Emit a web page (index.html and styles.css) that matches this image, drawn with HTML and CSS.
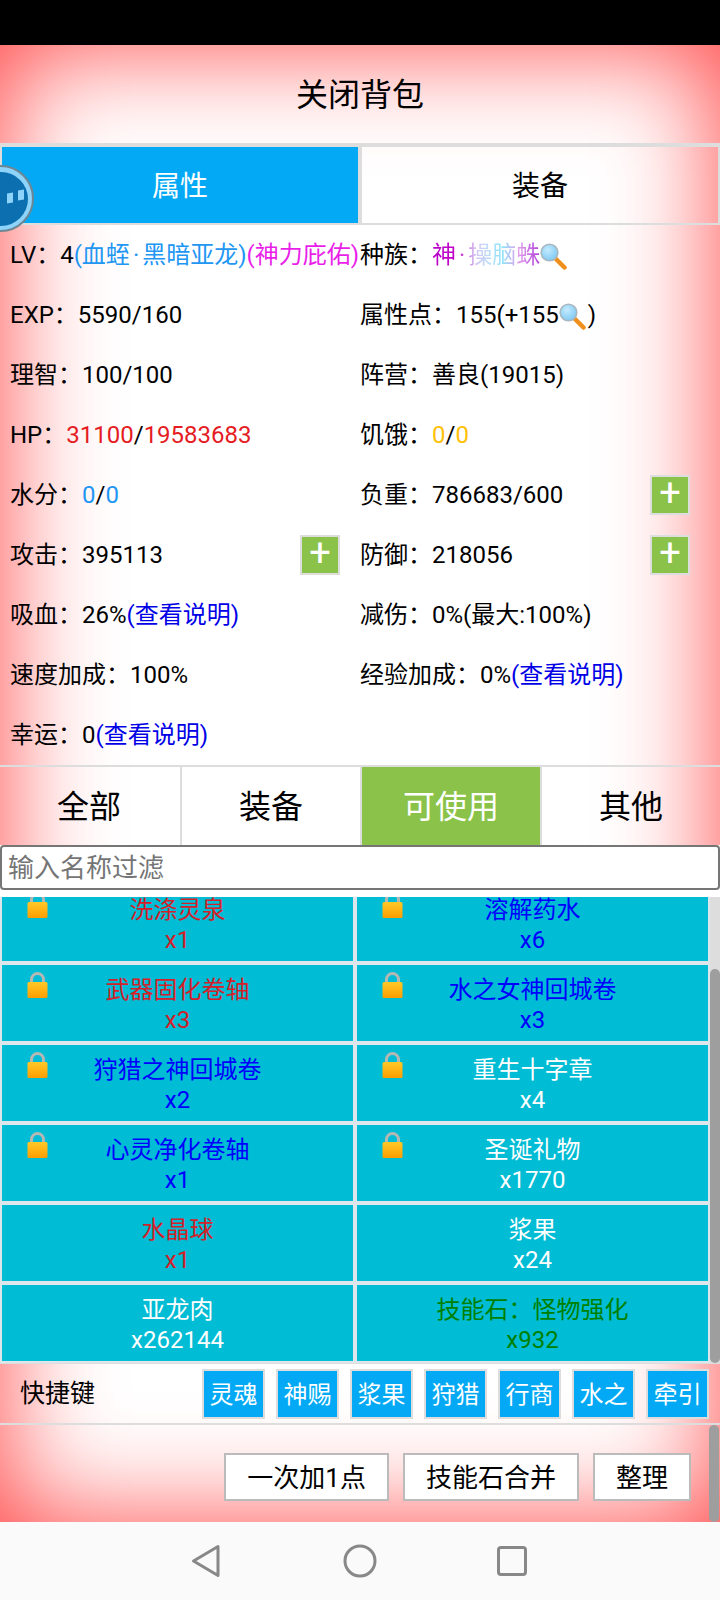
FILE: index.html
```html
<!DOCTYPE html>
<html lang="zh-CN">
<head>
    <meta charset="UTF-8">
    <meta name="viewport" content="width=device-width, initial-scale=1.0">
    <title>背包</title>
    <link rel="stylesheet" href="styles.css">
</head>
<body>
    <svg class="icon-defs" width="0" height="0">
        <defs>
            <linearGradient id="lockBody" x1="0" y1="0" x2="0" y2="1">
                <stop offset="0" stop-color="#ffc928"/>
                <stop offset="1" stop-color="#ff9d00"/>
            </linearGradient>
            <radialGradient id="lens" cx="0.4" cy="0.35" r="0.7">
                <stop offset="0" stop-color="#c4ebff"/>
                <stop offset="1" stop-color="#7cc8f4"/>
            </radialGradient>
            <symbol id="lock" viewBox="0 0 21 26">
                <path d="M4.5 12V7.5a6 6 0 0 1 12 0V12" fill="none" stroke="#b4b8b4" stroke-width="3"/>
                <rect x="0.5" y="10" width="20" height="16" rx="1.5" fill="url(#lockBody)"/>
            </symbol>
            <symbol id="glass" viewBox="0 0 27 27">
                <line x1="16" y1="16" x2="24.5" y2="24.5" stroke="#f0901c" stroke-width="4.5" stroke-linecap="round"/>
                <circle cx="9.5" cy="9.5" r="8.3" fill="url(#lens)" stroke="#a9b8c0" stroke-width="1.6"/>
            </symbol>
        </defs>
    </svg>

    <div class="status-bar"></div>

    <div class="page">
        <div class="title">关闭背包</div>

        <div class="main-tabs">
            <div class="main-tab active">属性</div>
            <div class="main-tab">装备</div>
        </div>

        <div class="stats">
            <div class="stat"><span class="stat-text">LV：4<span class="c-sky">(血蛭<span class="dot">·</span>黑暗亚龙)</span><span class="c-pink">(神力庇佑)</span></span></div>
            <div class="stat"><span class="stat-text">种族：<span class="rainbow">神<span class="dot">·</span>操脑蛛</span><svg class="glass"><use href="#glass"/></svg></span></div>

            <div class="stat"><span class="stat-text">EXP：5590/160</span></div>
            <div class="stat"><span class="stat-text">属性点：155(+155<svg class="glass"><use href="#glass"/></svg>)</span></div>

            <div class="stat"><span class="stat-text">理智：100/100</span></div>
            <div class="stat"><span class="stat-text">阵营：善良(19015)</span></div>

            <div class="stat"><span class="stat-text">HP：<span class="c-red">31100</span>/<span class="c-red">19583683</span></span></div>
            <div class="stat"><span class="stat-text">饥饿：<span class="c-amber">0</span>/<span class="c-amber">0</span></span></div>

            <div class="stat"><span class="stat-text">水分：<span class="c-sky">0</span>/<span class="c-sky">0</span></span></div>
            <div class="stat"><span class="stat-text">负重：786683/600</span><span class="plus">+</span></div>

            <div class="stat"><span class="stat-text">攻击：395113</span><span class="plus">+</span></div>
            <div class="stat"><span class="stat-text">防御：218056</span><span class="plus">+</span></div>

            <div class="stat"><span class="stat-text">吸血：26%<span class="c-link">(查看说明)</span></span></div>
            <div class="stat"><span class="stat-text">减伤：0%(最大:100%)</span></div>

            <div class="stat"><span class="stat-text">速度加成：100%</span></div>
            <div class="stat"><span class="stat-text">经验加成：0%<span class="c-link">(查看说明)</span></span></div>

            <div class="stat"><span class="stat-text">幸运：0<span class="c-link">(查看说明)</span></span></div>
        </div>

        <div class="filter-tabs">
            <div class="filter-tab">全部</div>
            <div class="filter-tab">装备</div>
            <div class="filter-tab active">可使用</div>
            <div class="filter-tab">其他</div>
        </div>

        <div class="filter-box">
            <input class="filter-input" type="text" placeholder="输入名称过滤">
        </div>

        <div class="bag">
            <div class="bag-list">
                <div class="bag-grid">
                    <div class="item c-item-red"><svg class="lock"><use href="#lock"/></svg>洗涤灵泉<br>x1</div>
                    <div class="item c-item-blue"><svg class="lock"><use href="#lock"/></svg>溶解药水<br>x6</div>
                    <div class="item c-item-red"><svg class="lock"><use href="#lock"/></svg>武器固化卷轴<br>x3</div>
                    <div class="item c-item-blue"><svg class="lock"><use href="#lock"/></svg>水之女神回城卷<br>x3</div>
                    <div class="item c-item-blue"><svg class="lock"><use href="#lock"/></svg>狩猎之神回城卷<br>x2</div>
                    <div class="item"><svg class="lock"><use href="#lock"/></svg>重生十字章<br>x4</div>
                    <div class="item c-item-blue"><svg class="lock"><use href="#lock"/></svg>心灵净化卷轴<br>x1</div>
                    <div class="item"><svg class="lock"><use href="#lock"/></svg>圣诞礼物<br>x1770</div>
                    <div class="item c-item-red">水晶球<br>x1</div>
                    <div class="item">浆果<br>x24</div>
                    <div class="item">亚龙肉<br>x262144</div>
                    <div class="item c-item-green">技能石：怪物强化<br>x932</div>
                </div>
            </div>
            <div class="bag-scroll"><div class="thumb"></div></div>
        </div>

        <div class="quick">
            <div class="quick-label">快捷键</div>
            <div class="quick-keys">
                <div class="quick-key">灵魂</div>
                <div class="quick-key">神赐</div>
                <div class="quick-key">浆果</div>
                <div class="quick-key">狩猎</div>
                <div class="quick-key">行商</div>
                <div class="quick-key">水之</div>
                <div class="quick-key">牵引</div>
            </div>
        </div>

        <div class="actions">
            <div class="action-btn">一次加1点</div>
            <div class="action-btn">技能石合并</div>
            <div class="action-btn">整理</div>
            <div class="page-thumb"></div>
        </div>
    </div>

    <div class="nav-bar">
        <svg class="nav-icon" width="30" height="34" viewBox="0 0 30 34"><path d="M27 2.5V31.5L2.5 17Z" fill="none" stroke="#888" stroke-width="3" stroke-linejoin="round"/></svg>
        <svg class="nav-icon" width="34" height="34" viewBox="0 0 34 34"><circle cx="17" cy="17" r="15" fill="none" stroke="#888" stroke-width="3"/></svg>
        <svg class="nav-icon" width="32" height="32" viewBox="0 0 32 32"><rect x="2.5" y="2.5" width="27" height="27" rx="2.5" fill="none" stroke="#888" stroke-width="3"/></svg>
    </div>

    <div class="float-ball"><div class="float-core"><i></i><i></i></div></div>
</body>
</html>
```

FILE: styles.css
```css
* {
    box-sizing: border-box;
}
body {
    margin: 0;
    width: 720px;
    height: 1600px;
    overflow: hidden;
    position: relative;
    background: #fff;
    color: #000;
    font-family: Roboto, "Noto Sans CJK SC", sans-serif;
    font-size: 24px;
}
.icon-defs {
    display: block;
    height: 0;
}
.status-bar {
    height: 45px;
    background: #000;
}
.page {
    position: relative;
    height: 1477px;
    box-shadow: inset 0 0 110px #ff4040;
}
.title {
    height: 98px;
    padding-bottom: 4px;
    display: flex;
    align-items: center;
    justify-content: center;
    font-size: 32px;
}

/* tabs */
.main-tabs {
    display: flex;
    height: 82px;
    border-top: 4px solid #ddd;
    border-bottom: 2px solid #ddd;
}
.main-tab {
    flex: 1;
    padding-bottom: 2px;
    display: flex;
    align-items: center;
    justify-content: center;
    font-size: 28px;
    border-left: 2px solid #ddd;
    border-right: 2px solid #ddd;
}
.main-tab.active {
    background: #03a9f4;
    background-clip: padding-box;
    color: #fff;
}

/* stats */
.stats {
    display: grid;
    grid-template-columns: 360px 360px;
    grid-auto-rows: 60px;
    border-bottom: 2px solid #ddd;
    height: 542px;
}
.stat {
    display: flex;
    align-items: center;
    white-space: pre;
}
.stat:nth-child(odd) {
    padding: 0 20px 0 10px;
}
.stat:nth-child(even) {
    padding-right: 30px;
}
.stat-text {
    margin-bottom: 6px;
}
.dot {
    padding: 0 3px;
}
.glass {
    width: 27px;
    height: 27px;
    margin-right: 2px;
    vertical-align: -7px;
}
.plus {
    margin-left: auto;
    width: 40px;
    height: 40px;
    border: 2px solid #ddd;
    background: #8bc34a;
    color: #fff;
    font-size: 38px;
    line-height: 33px;
    text-align: center;
}
.c-sky { color: #2196f3; }
.c-pink { color: #e91ee9; }
.c-red { color: #e51c23; }
.c-amber { color: #ffc107; }
.c-link { color: #0000e6; }
.rainbow {
    background: linear-gradient(90deg, #b800c8 0%, #c000c8 22%, #d4c4f2 40%, #bcdcf8 52%, #8fe4fa 65%, #e0a0ec 80%, #b040d8 100%);
    -webkit-background-clip: text;
    background-clip: text;
    color: transparent;
}

/* filter */
.filter-tabs {
    display: grid;
    grid-template-columns: repeat(4, 180px);
    height: 78px;
}
.filter-tab {
    padding-bottom: 5px;
    display: flex;
    align-items: center;
    justify-content: center;
    font-size: 32px;
    border-left: 2px solid #ddd;
}
.filter-tab:first-child {
    border-left: 0;
    padding-right: 2px;
}
.filter-tab.active {
    background: #8bc34a;
    background-clip: padding-box;
    color: #fff;
}
.filter-box {
    height: 52px;
    background: #fff;
}
.filter-input {
    display: block;
    width: 100%;
    height: 45px;
    padding: 0 6px;
    border: 2px solid #767676;
    border-radius: 4px;
    background: #fff;
    font-family: inherit;
    font-size: 26px;
    outline: none;
}
.filter-input::placeholder {
    color: #757575;
}

/* bag list */
.bag {
    display: flex;
    height: 466px;
}
.bag-list {
    width: 710px;
    overflow: hidden;
    background: #dde6ea;
}
.bag-grid {
    display: grid;
    grid-template-columns: 355px 355px;
    margin-top: -14px;
}
.item {
    position: relative;
    height: 80px;
    padding: 10px 0 6px;
    border: 2px solid #dde6ea;
    background: #00bcd4;
    background-clip: padding-box;
    color: #fff;
    text-align: center;
    line-height: 30px;
}
.lock {
    position: absolute;
    left: 25px;
    top: 7px;
    width: 21px;
    height: 26px;
}
.c-item-red { color: #d32029; }
.c-item-blue { color: #0000ff; }
.c-item-green { color: #008000; }
.bag-scroll {
    width: 10px;
    height: 466px;
    padding-top: 72px;
    background: #ddd;
}
.thumb {
    height: 394px;
    background: #9e9e9e;
    border-radius: 5px;
}

/* quick keys */
.quick {
    display: flex;
    justify-content: space-between;
    height: 62px;
    border-top: 1px solid #ddd;
    border-bottom: 2px solid #ddd;
}
.quick-label {
    padding: 9px 0 0 20px;
    font-size: 25px;
}
.quick-keys {
    display: flex;
    gap: 11px;
    padding: 5px 11px 0 0;
}
.quick-key {
    width: 63px;
    height: 50px;
    padding-bottom: 3px;
    border: 2px solid #ddd;
    background: #03a9f4;
    color: #fff;
    display: flex;
    align-items: center;
    justify-content: center;
}

/* bottom buttons */
.actions {
    display: flex;
    justify-content: flex-end;
    gap: 14px;
    padding: 28px 29px 0 0;
}
.action-btn {
    height: 48px;
    padding: 0 21px 4px;
    border: 2px solid #bbb;
    background: #fff;
    font-size: 26px;
    display: flex;
    align-items: center;
}
.page-thumb {
    position: absolute;
    right: 1px;
    top: 1380px;
    width: 10px;
    height: 97px;
    background: #9e9e9e;
    border-radius: 5px;
}

/* system nav */
.nav-bar {
    height: 78px;
    background: #fafafa;
    display: grid;
    grid-template-columns: 1fr 1fr 1fr;
    padding: 0 129px;
    align-items: center;
    justify-items: center;
}
.nav-icon:last-child {
    margin-right: 4px;
}

/* floating ball sits over the tabs */
.float-ball {
    position: absolute;
    left: -33px;
    top: 165px;
    width: 67px;
    height: 67px;
    border-radius: 50%;
    background: #8ed4fa;
    border: 2px solid #6d8794;
    display: flex;
    align-items: center;
    justify-content: center;
}
.float-core {
    width: 54px;
    height: 54px;
    border-radius: 50%;
    background: #0b6fb0;
    position: relative;
}
.float-core i {
    position: absolute;
    top: 21px;
    left: 33px;
    width: 6px;
    height: 10px;
    background: #8ed4fa;
    transform: skewY(-8deg);
}
.float-core i + i {
    left: 44px;
    top: 18px;
}
```
